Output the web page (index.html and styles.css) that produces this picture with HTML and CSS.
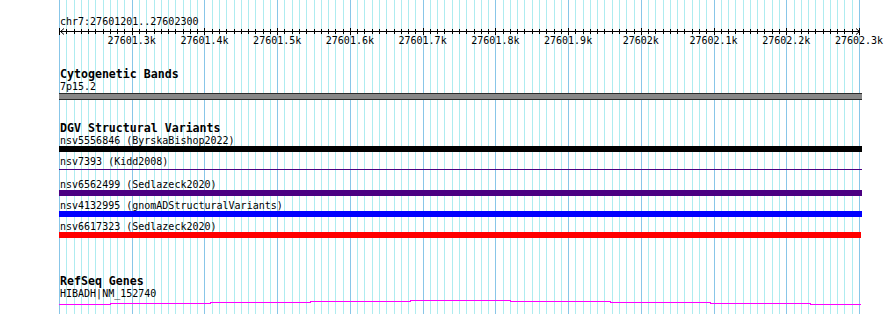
FILE: index.html
```html
<!DOCTYPE html>
<html lang="en">
<head>
<meta charset="utf-8">
<title>Genome browser view</title>
<link rel="stylesheet" href="styles.css">
</head>
<body>
<div class="page">
  <svg class="grid" width="890" height="314" viewBox="0 0 890 314" aria-hidden="true">
    <defs>
      <g id="gridcell">
        <line class="major" x1="0" y1="0" x2="0" y2="314"/>
        <line class="minor" x1="7.27" y1="0" x2="7.27" y2="314"/>
        <line class="minor" x1="14.55" y1="0" x2="14.55" y2="314"/>
        <line class="minor" x1="21.82" y1="0" x2="21.82" y2="314"/>
        <line class="minor" x1="29.09" y1="0" x2="29.09" y2="314"/>
        <line class="minor" x1="36.36" y1="0" x2="36.36" y2="314"/>
        <line class="minor" x1="43.64" y1="0" x2="43.64" y2="314"/>
        <line class="minor" x1="50.91" y1="0" x2="50.91" y2="314"/>
        <line class="minor" x1="58.18" y1="0" x2="58.18" y2="314"/>
        <line class="minor" x1="65.45" y1="0" x2="65.45" y2="314"/>
      </g>
    </defs>
    <g transform="translate(59.5 0)">
      <use href="#gridcell" x="0"/>
      <use href="#gridcell" x="72.73"/>
      <use href="#gridcell" x="145.45"/>
      <use href="#gridcell" x="218.18"/>
      <use href="#gridcell" x="290.91"/>
      <use href="#gridcell" x="363.64"/>
      <use href="#gridcell" x="436.36"/>
      <use href="#gridcell" x="509.09"/>
      <use href="#gridcell" x="581.82"/>
      <use href="#gridcell" x="654.55"/>
      <use href="#gridcell" x="727.27"/>
      <line class="major" x1="800" y1="0" x2="800" y2="314"/>
    </g>
  </svg>

  <div class="content">
    <div class="location">chr7:27601201..27602300</div>

    <svg class="ruler" width="803" height="41" viewBox="0 0 803 41" aria-label="Scale 27601.3k to 27602.3k">
      <defs>
        <g id="tickcell">
          <line class="tick-major" x1="0" y1="1" x2="0" y2="8"/>
          <line class="tick" x1="7.27" y1="2" x2="7.27" y2="7"/>
          <line class="tick" x1="14.55" y1="2" x2="14.55" y2="7"/>
          <line class="tick" x1="21.82" y1="2" x2="21.82" y2="7"/>
          <line class="tick" x1="29.09" y1="2" x2="29.09" y2="7"/>
          <line class="tick" x1="36.36" y1="2" x2="36.36" y2="7"/>
          <line class="tick" x1="43.64" y1="2" x2="43.64" y2="7"/>
          <line class="tick" x1="50.91" y1="2" x2="50.91" y2="7"/>
          <line class="tick" x1="58.18" y1="2" x2="58.18" y2="7"/>
          <line class="tick" x1="65.45" y1="2" x2="65.45" y2="7"/>
        </g>
      </defs>
      <g transform="translate(0.5 0)">
        <use href="#tickcell" x="0"/>
        <use href="#tickcell" x="72.73"/>
        <use href="#tickcell" x="145.45"/>
        <use href="#tickcell" x="218.18"/>
        <use href="#tickcell" x="290.91"/>
        <use href="#tickcell" x="363.64"/>
        <use href="#tickcell" x="436.36"/>
        <use href="#tickcell" x="509.09"/>
        <use href="#tickcell" x="581.82"/>
        <use href="#tickcell" x="654.55"/>
        <use href="#tickcell" x="727.27"/>
        <line class="tick-major" x1="800" y1="1" x2="800" y2="8"/>
      </g>
      <line class="axis" x1="1" y1="4.5" x2="801" y2="4.5"/>
      <polyline class="arrow" points="5,1.5 1.5,4.5 5,7.5"/>
      <polyline class="arrow" points="797,1.5 800.5,4.5 797,7.5"/>
      <g class="scale-labels">
        <text x="72.7" y="17">27601.3k</text>
        <text x="145.5" y="17">27601.4k</text>
        <text x="218.2" y="17">27601.5k</text>
        <text x="290.9" y="17">27601.6k</text>
        <text x="363.6" y="17">27601.7k</text>
        <text x="436.4" y="17">27601.8k</text>
        <text x="509.1" y="17">27601.9k</text>
        <text x="581.8" y="17">27602k</text>
        <text x="654.5" y="17">27602.1k</text>
        <text x="727.3" y="17">27602.2k</text>
        <text x="800" y="17">27602.3k</text>
      </g>
    </svg>

    <section class="track track-cyto">
      <h2 class="track-title">Cytogenetic Bands</h2>
      <div class="feat-label">7p15.2</div>
      <div class="band"></div>
    </section>

    <section class="track track-dgv">
      <h2 class="track-title">DGV Structural Variants</h2>
      <div class="feature">
        <div class="feat-label">nsv5556846 (ByrskaBishop2022)</div>
        <div class="bar bar-black"></div>
      </div>
      <div class="feature">
        <div class="feat-label">nsv7393 (Kidd2008)</div>
        <div class="bar-slot"><div class="bar-thin"></div></div>
      </div>
      <div class="feature">
        <div class="feat-label">nsv6562499 (Sedlazeck2020)</div>
        <div class="bar bar-indigo"></div>
      </div>
      <div class="feature">
        <div class="feat-label">nsv4132995 (gnomADStructuralVariants)</div>
        <div class="bar bar-blue"></div>
      </div>
      <div class="feature">
        <div class="feat-label">nsv6617323 (Sedlazeck2020)</div>
        <div class="bar bar-red"></div>
      </div>
    </section>

    <section class="track track-refseq">
      <h2 class="track-title">RefSeq Genes</h2>
      <div class="feat-label">HIBADH|NM_152740</div>
      <svg class="gene" width="803" height="8" viewBox="0 0 803 8" aria-hidden="true">
        <polyline class="gene-line" points="0,4.5 51,4.5 51,3.5 151,3.5 151,2.5 251,2.5 251,1.5 351,1.5 351,0.5 451,0.5 451,1.5 551,1.5 551,2.5 651,2.5 651,3.5 751,3.5 751,4.5 802,4.5"/>
      </svg>
    </section>
  </div>
</div>
</body>
</html>
```

FILE: styles.css
```css
html, body {
  margin: 0;
  padding: 0;
  background: #ffffff;
}

.page {
  position: relative;
  width: 890px;
  height: 314px;
  overflow: hidden;
  font-family: "DejaVu Sans Mono", "Liberation Mono", monospace;
  color: #000;
}

.grid {
  position: absolute;
  left: 0;
  top: 0;
  z-index: 0;
  shape-rendering: crispEdges;
}

.grid .minor {
  stroke: #aeecf0;
  stroke-width: 1;
}

.grid .major {
  stroke: #88c6e8;
  stroke-width: 1;
}

.content {
  position: relative;
  z-index: 1;
  padding: 16px 0 0 59px;
}

.location,
.feat-label {
  font-size: 10px;
  line-height: 11px;
  height: 11px;
  padding-left: 1px;
  white-space: nowrap;
}

.ruler {
  display: block;
  overflow: visible;
  shape-rendering: crispEdges;
}

.ruler .axis,
.ruler .tick,
.ruler .tick-major {
  stroke: #000;
  stroke-width: 1;
}

.ruler .arrow {
  fill: none;
  stroke: #000;
  stroke-width: 1;
  shape-rendering: auto;
}

.scale-labels text {
  font-family: "DejaVu Sans Mono", "Liberation Mono", monospace;
  font-size: 10px;
  text-anchor: middle;
  fill: #000;
}

.track-title {
  margin: 0;
  font-size: 11.6px;
  line-height: 13px;
  height: 13px;
  font-weight: bold;
  padding-left: 1px;
  white-space: nowrap;
}

.band {
  width: 803px;
  height: 5px;
  margin-top: 1px;
  background: #888888;
  border-top: 1px solid #2b2b2b;
  border-bottom: 1px solid #2b2b2b;
}

.track-dgv {
  margin-top: 22px;
}

.feature {
  margin-bottom: 4px;
}

.feature:last-child {
  margin-bottom: 0;
}

.bar {
  width: 803px;
  height: 6px;
}

.bar-black { background: #000000; }
.bar-indigo { background: #4b0082; }
.bar-blue { background: #0000ff; }
.bar-red { background: #ff0000; width: 802px; }

.bar-slot {
  height: 6px;
  width: 803px;
}

.bar-thin {
  margin-top: 2px;
  height: 1px;
  background: #4b0082;
}

.track-refseq {
  margin-top: 37px;
}

.gene {
  display: block;
  margin-top: 1px;
  shape-rendering: crispEdges;
}

.gene-line {
  fill: none;
  stroke: #ff00ff;
  stroke-width: 1;
}
```
